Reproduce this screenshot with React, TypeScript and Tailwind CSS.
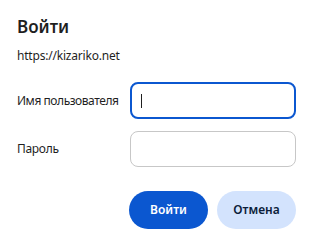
export default function App() {
  return (
    <div className="h-[243px] w-[313px] bg-white font-['Noto_Sans',sans-serif] text-[#1f1f1f]">
      <div className="px-[17px] pt-[15px]">
        <h1 className="text-[17px] font-semibold leading-[24px]">Войти</h1>
        <p className="mt-[8px] text-[12px] leading-[18px] tracking-[-0.2px]">https://kizariko.net</p>
        <div className="mt-[17px] grid grid-cols-[113px_166px] items-center gap-y-[12px]">
          <label className="whitespace-nowrap text-[12px] tracking-[-0.45px]">Имя пользователя</label>
          <div className="flex h-[37px] items-center rounded-[8px] border-2 border-[#0b57d0] px-[9px]">
            <span className="h-[14px] w-px bg-[#1f1f1f]" />
          </div>
          <label className="whitespace-nowrap text-[12px] tracking-[-0.3px]">Пароль</label>
          <div className="h-[36px] rounded-[8px] border border-[#c7c7c7]" />
        </div>
        <div className="mt-[24px] flex justify-end gap-[9px]">
          <button className="h-[38px] w-[79px] rounded-full bg-[#0b57d0] text-[12px] font-semibold text-white">
            Войти
          </button>
          <button className="h-[38px] w-[79px] rounded-full bg-[#d3e3fd] text-[12px] font-semibold text-[#0b1d3a]">
            Отмена
          </button>
        </div>
      </div>
    </div>
  )
}
